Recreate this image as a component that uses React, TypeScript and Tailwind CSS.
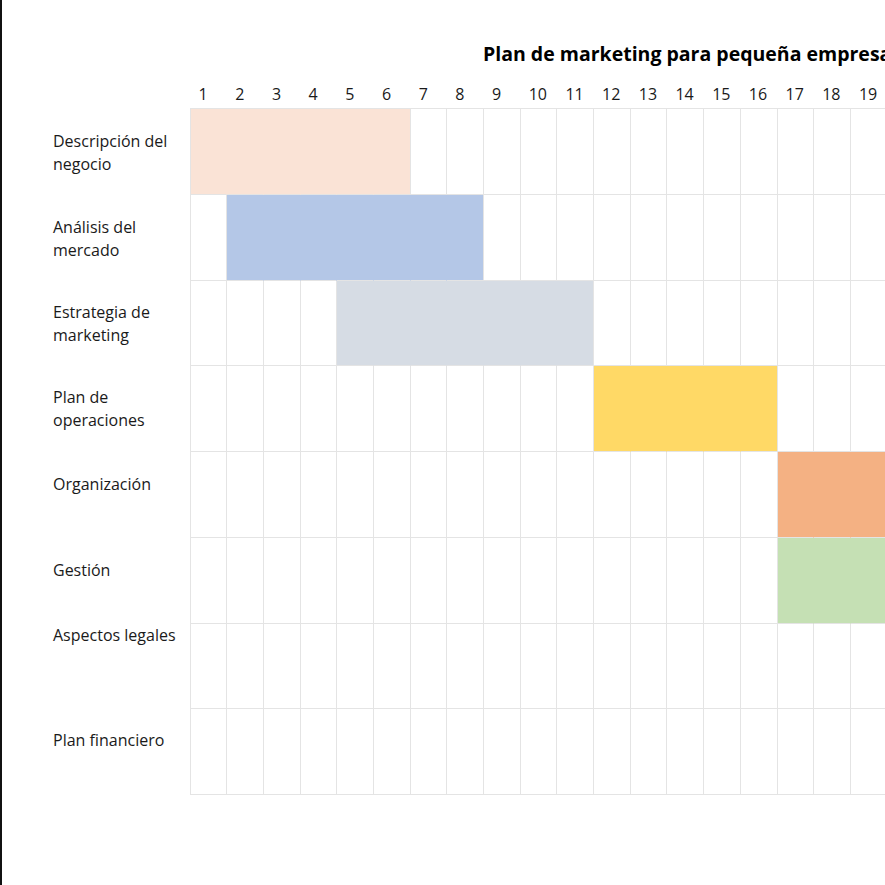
import React from 'react';

type Task = {
  label: string[];
  start: number;
  end: number;
  fill: string;
  edge: string;
  pad: string;
};

const COLUMNS = 19;

const tasks: Task[] = [
  { label: ['Descripción del', 'negocio'], start: 1, end: 6, fill: 'bg-[#fae3d6]', edge: 'border-r-[#fae3d6]', pad: 'pt-[22px]' },
  { label: ['Análisis del', 'mercado'], start: 2, end: 8, fill: 'bg-[#b4c7e7]', edge: 'border-r-[#b4c7e7]', pad: 'pt-[22px]' },
  { label: ['Estrategia de', 'marketing'], start: 5, end: 11, fill: 'bg-[#d6dce4]', edge: 'border-r-[#d6dce4]', pad: 'pt-[21px]' },
  { label: ['Plan de', 'operaciones'], start: 12, end: 16, fill: 'bg-[#ffd966]', edge: 'border-r-[#ffd966]', pad: 'pt-[21px]' },
  { label: ['Organización'], start: 17, end: 22, fill: 'bg-[#f4b183]', edge: 'border-r-[#f4b183]', pad: 'pt-[22px]' },
  { label: ['Gestión'], start: 17, end: 22, fill: 'bg-[#c5e0b4]', edge: 'border-r-[#c5e0b4]', pad: 'pt-[22px]' },
  { label: ['Aspectos legales'], start: 0, end: -1, fill: '', edge: '', pad: 'pt-px' },
  { label: ['Plan financiero'], start: 0, end: -1, fill: '', edge: '', pad: 'pt-[21px]' },
];

const days = Array.from({ length: COLUMNS }, (_, i) => i + 1);

export default function App() {
  return (
    <div className="w-[885px] h-[885px] overflow-hidden bg-white border-l-2 border-[#111] font-['Open_Sans',sans-serif] text-[#1a1a1a]">
      <div className="pt-[40px] pl-[481px] h-[84px] whitespace-nowrap text-[19.5px] font-bold leading-[27px] text-black">
        Plan de marketing para pequeña empresa
      </div>

      <div className="flex pl-[187.5px] h-[24px]">
        {days.map((d) => (
          <div key={d} className="w-[36.7px] shrink-0 pl-[9px] text-[16px] leading-[21px]">
            {d}
          </div>
        ))}
      </div>

      <div className="flex">
        <div className="w-[187.5px] shrink-0 pl-[51px]">
          {tasks.map((t) => (
            <div key={t.label.join(' ')} className={`h-[85.75px] ${t.pad} text-[16px] leading-[23px]`}>
              {t.label.map((line) => (
                <div key={line} className="whitespace-nowrap">{line}</div>
              ))}
            </div>
          ))}
        </div>

        <div className="border-l border-t border-[#e4e4e4]">
          {tasks.map((t) => (
            <div key={t.label.join(' ')} className="flex h-[85.75px]">
              {days.map((d) => {
                const inBar = d >= t.start && d <= t.end;
                const lastOfBar = d === t.end;
                return (
                  <div
                    key={d}
                    className={`w-[36.7px] shrink-0 border-r border-b border-[#e4e4e4] ${inBar ? t.fill : ''} ${inBar && !lastOfBar ? t.edge : ''}`}
                  />
                );
              })}
            </div>
          ))}
        </div>
      </div>
    </div>
  );
}
